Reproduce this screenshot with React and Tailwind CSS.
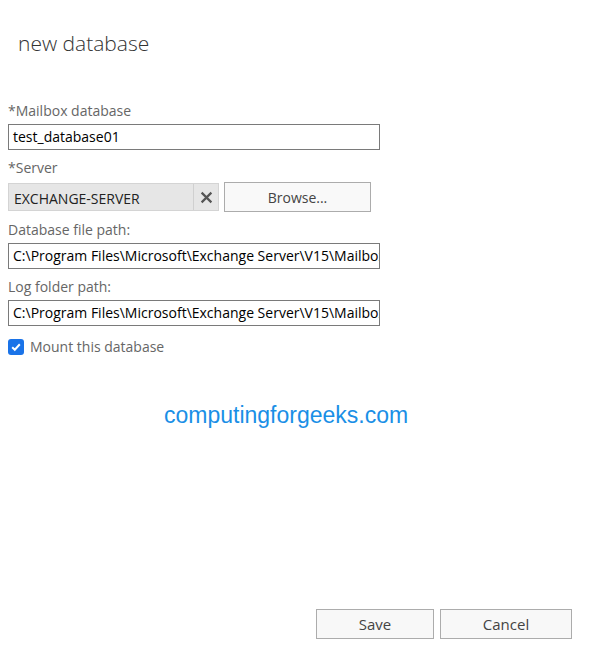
import React from 'react'

const font = { fontFamily: '"Open Sans", "Noto Sans", sans-serif' }

const Field = ({ label, value, className = '' }) => (
  <div className={className}>
    <div className="text-[14px] leading-[18px] text-[#666]">{label}</div>
    <div className="mt-[4px] h-[26px] w-[372px] border border-[#7a7a7a] bg-white px-[4px] overflow-hidden whitespace-nowrap text-[14px] leading-[24px] text-black">
      {value}
    </div>
  </div>
)

const App = () => {
  return (
    <div className="relative w-[605px] h-[663px] bg-white" style={font}>
      <h1 className="pt-[29px] pl-[18px] text-[21px] leading-[28px] font-light text-[#333]">
        new database
      </h1>

      <div className="pl-[8px] pt-[45px]">
        <Field label="*Mailbox database" value="test_database01" />

        {/* Server picker */}
        <div className="mt-[9px]">
          <div className="text-[14px] leading-[18px] text-[#666]">*Server</div>
          <div className="mt-[5px] flex items-center gap-[5px]">
            <div className="flex h-[28px] w-[211px] border border-[#d4d4d4] bg-[#e6e6e6]">
              <div className="flex-1 px-[5px] pt-[1px] text-[14px] leading-[28px] text-[#222]">EXCHANGE-SERVER</div>
              <div className="flex w-[25px] items-center justify-center border-l border-[#d0d0d0]">
                <svg width="13" height="13" viewBox="0 0 12 12">
                  <path d="M1.5 1.5 L10.5 10.5 M10.5 1.5 L1.5 10.5" stroke="#555" strokeWidth="2" />
                </svg>
              </div>
            </div>
            <button className="h-[30px] w-[147px] border border-[#acacac] bg-[#f9f9f9] text-[14px] text-[#444]">
              Browse...
            </button>
          </div>
        </div>

        <Field
          className="mt-[9px]"
          label="Database file path:"
          value="C:\Program Files\Microsoft\Exchange Server\V15\Mailbox\test_database01\test_database01.edb"
        />
        <Field
          className="mt-[9px]"
          label="Log folder path:"
          value="C:\Program Files\Microsoft\Exchange Server\V15\Mailbox\test_database01"
        />

        <label className="mt-[10px] flex items-center gap-[6px]">
          <span className="flex h-[16px] w-[16px] items-center justify-center rounded-[3px] bg-[#1a73e8]">
            <svg width="12" height="12" viewBox="0 0 12 12">
              <path d="M2.2 6.2 L4.8 8.7 L9.8 3.3" fill="none" stroke="white" strokeWidth="2" />
            </svg>
          </span>
          <span className="text-[14px] text-[#666]">Mount this database</span>
        </label>
      </div>

      <div
        className="mt-[44px] pl-[164px] text-[23px] leading-[28px] text-[#1a8fe6]"
        style={{ fontFamily: '"Liberation Sans", Arial, sans-serif' }}
      >
        computingforgeeks.com
      </div>

      <div className="absolute left-[316px] top-[609px] flex gap-[6px]">
        <button className="h-[30px] w-[118px] border border-[#acacac] bg-[#f8f8f8] text-[15px] text-[#444]">
          Save
        </button>
        <button className="h-[30px] w-[132px] border border-[#acacac] bg-[#f8f8f8] text-[15px] text-[#444]">
          Cancel
        </button>
      </div>
    </div>
  )
}

export default App
